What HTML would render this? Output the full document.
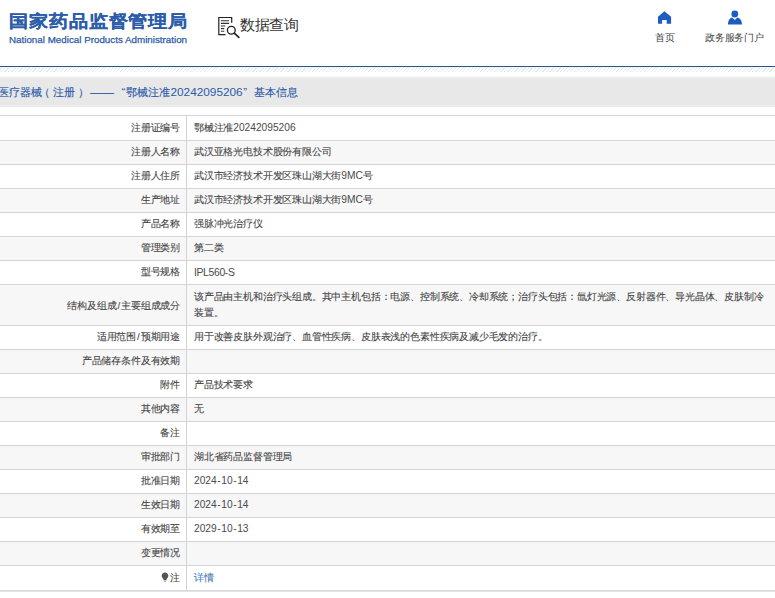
<!DOCTYPE html>
<html><head><meta charset="utf-8">
<style>
*{margin:0;padding:0;box-sizing:border-box}
html,body{width:775px;height:598px;overflow:hidden;background:#fff;font-family:"Liberation Sans",sans-serif;color:#444}
b{font-weight:normal}
.logo-cn{position:absolute;left:9px;top:9.6px;transform:scaleY(0.89);transform-origin:0 0;font-size:19.6px;font-weight:bold;color:#2d5ca9;-webkit-text-stroke:0.15px #2d5ca9;letter-spacing:-0.1px;line-height:24px;white-space:nowrap}
.logo-en{position:absolute;left:9px;top:34px;font-size:9.8px;color:#2b5aa5;-webkit-text-stroke:0.25px #2b5aa5;line-height:12px;white-space:nowrap}
.sj{position:absolute;left:240px;top:13px;font-size:14.7px;letter-spacing:-0.3px;color:#333;line-height:24px;white-space:nowrap}
.sjico{position:absolute;left:214px;top:12px}
.nav{position:absolute;top:30.5px;font-size:9.8px;color:#444;line-height:13px;white-space:nowrap;letter-spacing:-0.2px}
.line{position:absolute;left:0;top:66px;width:775px;height:1px;background:#27598c}
.line2{position:absolute;left:0;top:67px;width:775px;height:1px;background:#eaf6fb}
.hatch{position:absolute;left:0;top:68px;width:775px;height:3.5px;background:repeating-linear-gradient(-45deg,#fff 0 1px,#e4eaee 1px 1.8px,#fff 1.8px 2.47px)}
.bar{position:absolute;left:0;top:76px;width:775px;height:31px;background:linear-gradient(#fdfdfd,#f4f4f4 1px,#ebebeb 2.5px,#e8e8e8 3.5px,#e8e8e8 28px,#eeeeee)}
.t{position:absolute;top:84px;font-size:11.4px;letter-spacing:0.1px;color:#2c5aa8;-webkit-text-stroke:0.12px #2c5aa8;line-height:16px;white-space:nowrap}
.r{position:absolute;left:0;width:775px;border-top:1px solid #d4d4d4;font-size:9.8px;letter-spacing:-0.18px;-webkit-text-stroke:0.1px #444}
.l{position:absolute;left:0;top:0;bottom:0;width:187px;text-align:right;padding-right:6px;border-right:1px solid #d4d4d4;white-space:nowrap}
.v{position:absolute;left:194px;top:0;bottom:0;right:0;white-space:nowrap}
.v.two{white-space:normal;line-height:16px;padding-top:4px}
.la{font-size:10.2px;letter-spacing:0;-webkit-text-stroke:0;color:#4a4a4a}.hy{padding:0 0.6px}.sl{padding:0 1.1px}
.v a{color:#3d8ee3;text-decoration:none}
.bot{position:absolute;left:0;top:590px;width:775px;height:2px;background:linear-gradient(#d8d8d8 50%,#e4e4e4 50%)}
.bulb{display:inline-block;width:8px;height:10px;vertical-align:-1px;margin-right:1.3px}
</style></head><body>
<div class="logo-cn">国家药品监督管理局</div>
<div class="logo-en">National Medical Products Administration</div>
<svg class="sjico" width="30" height="30" viewBox="0 0 30 30">
 <path d="M11.6 22.6H4.8V5.5H17.7V10.8" fill="none" stroke="#222" stroke-width="1.2"/>
 <path d="M6.9 8.8H15.1M6.9 11.4H15.1M6.9 14H11.3M6.9 16.6H10.3M6.9 19.3H10.3" stroke="#333" stroke-width="1.1"/>
 <circle cx="17.3" cy="18.2" r="3.9" fill="none" stroke="#222" stroke-width="1.35"/>
 <path d="M20.3 21.2L24.8 25.3" stroke="#222" stroke-width="1.8" stroke-linecap="round"/>
</svg>
<div class="sj">数据查询</div>
<svg style="position:absolute;left:650px;top:5px" width="30" height="25" viewBox="0 0 30 25">
 <path d="M14.4 6.3L8 11.8V18.8H12.1V15.1H16.7V18.8H21.1V11.8Z" fill="#1d5cc0"/>
</svg>
<div class="nav" style="left:655px">首页</div>
<svg style="position:absolute;left:720px;top:5px" width="30" height="25" viewBox="0 0 30 25">
 <circle cx="14.8" cy="9" r="3.4" fill="#1d5cc0"/>
 <path d="M8 19.4C8 15.5 10 13 12.2 12.6L14.8 15L17.4 12.6C19.6 13 22 15.5 22 19.4Z" fill="#1d5cc0"/>
</svg>
<div class="nav" style="left:705px">政务服务门户</div>
<div class="line"></div>
<div class="line2"></div>
<div class="hatch"></div>
<div class="bar"></div>
<div class="t" style="left:-2.5px">医疗器械</div>
<div class="t" style="left:38.9px">（</div>
<div class="t" style="left:52.8px">注册</div>
<div class="t" style="left:77.5px">）</div>
<div class="t" style="left:90.2px;font-size:11.8px;letter-spacing:0">——</div>
<div class="t" style="left:121.5px;-webkit-text-stroke:0">“</div>
<div class="t" style="left:125.5px">鄂械注准</div>
<div class="t" style="left:170.5px;font-size:11.8px;letter-spacing:0;-webkit-text-stroke:0">20242095206</div>
<div class="t" style="left:243.3px;-webkit-text-stroke:0">”</div>
<div class="t" style="left:253.8px">基本信息</div>
<div class="r" style="top:115px;height:25px;background:#fff"><div class="l" style="line-height:23.5px">注册证编号</div><div class="v" style="line-height:23.5px">鄂械注准<b class="la">20242095206</b></div></div>
<div class="r" style="top:140px;height:24px;background:#f7f7f7"><div class="l" style="line-height:22.5px">注册人名称</div><div class="v" style="line-height:22.5px">武汉亚格光电技术股份有限公司</div></div>
<div class="r" style="top:164px;height:24px;background:#fff"><div class="l" style="line-height:22.5px">注册人住所</div><div class="v" style="line-height:22.5px">武汉市经济技术开发区珠山湖大街<b class="la">9MC</b>号</div></div>
<div class="r" style="top:188px;height:24px;background:#f7f7f7"><div class="l" style="line-height:22.5px">生产地址</div><div class="v" style="line-height:22.5px">武汉市经济技术开发区珠山湖大街<b class="la">9MC</b>号</div></div>
<div class="r" style="top:212px;height:24px;background:#fff"><div class="l" style="line-height:22.5px">产品名称</div><div class="v" style="line-height:22.5px">强脉冲光治疗仪</div></div>
<div class="r" style="top:236px;height:24px;background:#f7f7f7"><div class="l" style="line-height:22.5px">管理类别</div><div class="v" style="line-height:22.5px">第二类</div></div>
<div class="r" style="top:260px;height:24px;background:#fff"><div class="l" style="line-height:22.5px">型号规格</div><div class="v" style="line-height:22.5px"><span style="letter-spacing:-0.35px;font-size:10.4px;position:relative;top:1px;-webkit-text-stroke:0;color:#4a4a4a">IPL560-S</span></div></div>
<div class="r" style="top:284px;height:41px;background:#f7f7f7"><div class="l" style="line-height:41.5px">结构及组成<b class="sl">/</b>主要组成成分</div><div class="v two" >该产品由主机和治疗头组成。其中主机包括：电源、控制系统、冷却系统；治疗头包括：氙灯光源、反射器件、导光晶体、皮肤制冷<br>装置。</div></div>
<div class="r" style="top:325px;height:24px;background:#fff"><div class="l" style="line-height:22.5px">适用范围<b class="sl">/</b>预期用途</div><div class="v" style="line-height:22.5px">用于改善皮肤外观治疗、血管性疾病、皮肤表浅的色素性疾病及减少毛发的治疗。</div></div>
<div class="r" style="top:349px;height:24px;background:#f7f7f7"><div class="l" style="line-height:22.5px">产品储存条件及有效期</div><div class="v" style="line-height:22.5px"></div></div>
<div class="r" style="top:373px;height:24px;background:#fff"><div class="l" style="line-height:22.5px">附件</div><div class="v" style="line-height:22.5px">产品技术要求</div></div>
<div class="r" style="top:397px;height:24px;background:#f7f7f7"><div class="l" style="line-height:22.5px">其他内容</div><div class="v" style="line-height:22.5px">无</div></div>
<div class="r" style="top:421px;height:24px;background:#fff"><div class="l" style="line-height:22.5px">备注</div><div class="v" style="line-height:22.5px"></div></div>
<div class="r" style="top:445px;height:24px;background:#f7f7f7"><div class="l" style="line-height:22.5px">审批部门</div><div class="v" style="line-height:22.5px">湖北省药品监督管理局</div></div>
<div class="r" style="top:469px;height:24px;background:#fff"><div class="l" style="line-height:22.5px">批准日期</div><div class="v" style="line-height:22.5px"><b class="la">2024<b class="hy">-</b>10<b class="hy">-</b>14</b></div></div>
<div class="r" style="top:493px;height:24px;background:#f7f7f7"><div class="l" style="line-height:22.5px">生效日期</div><div class="v" style="line-height:22.5px"><b class="la">2024<b class="hy">-</b>10<b class="hy">-</b>14</b></div></div>
<div class="r" style="top:517px;height:24px;background:#fff"><div class="l" style="line-height:22.5px">有效期至</div><div class="v" style="line-height:22.5px"><b class="la">2029<b class="hy">-</b>10<b class="hy">-</b>13</b></div></div>
<div class="r" style="top:541px;height:24px;background:#f7f7f7"><div class="l" style="line-height:22.5px">变更情况</div><div class="v" style="line-height:22.5px"></div></div>
<div class="r" style="top:565px;height:25px;background:#fff"><div class="l" style="line-height:23.5px"><svg class="bulb" viewBox="0 0 8 10"><path d="M4 0.6C2.1 0.6 0.7 2 0.7 3.8C0.7 5.2 1.6 6 2.3 6.9L2.6 8.2H5.4L5.7 6.9C6.4 6 7.3 5.2 7.3 3.8C7.3 2 5.9 0.6 4 0.6Z" fill="#555"/><path d="M2.8 8.8H5.2L4.8 9.6H3.2Z" fill="#777"/></svg>注</div><div class="v" style="line-height:23.5px"><a>详情</a></div></div>
<div class="bot"></div></body></html>
